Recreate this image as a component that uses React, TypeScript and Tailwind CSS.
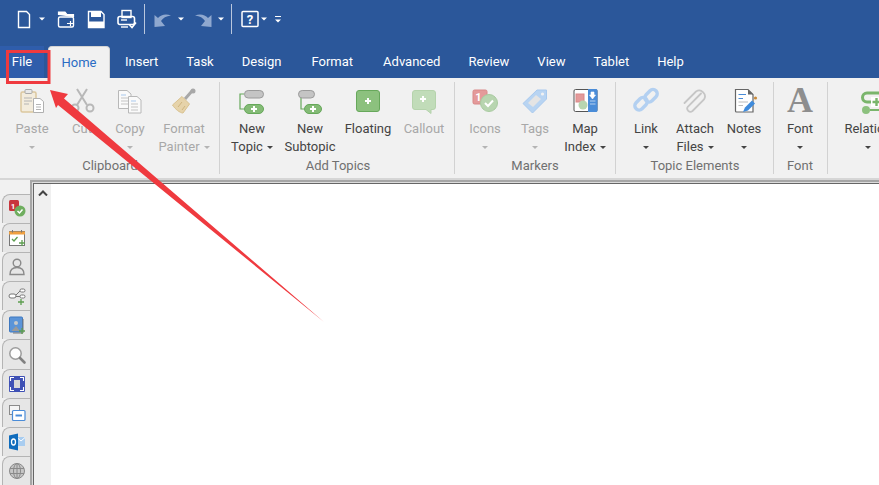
import { ReactNode } from "react";

const font = { fontFamily: 'Roboto, "Open Sans", sans-serif' };

function Caret({ light, className = "" }: { light?: boolean; className?: string }) {
  return (
    <svg viewBox="0 0 6 3" className={`inline-block h-[3px] w-1.5 ${className}`}>
      <path d="M0 0H6L3 3Z" fill={light ? "#b4b4b4" : "#444444"} />
    </svg>
  );
}

function Icon({ children }: { children: ReactNode }) {
  return (
    <svg viewBox="0 0 28 28" className="h-7 w-7 shrink-0">
      {children}
    </svg>
  );
}

function Plus({ x, y, size = 3, color = "#ffffff", w = 2 }: { x: number; y: number; size?: number; color?: string; w?: number }) {
  return <path d={`M${x - size} ${y}H${x + size}M${x} ${y - size}V${y + size}`} stroke={color} strokeWidth={w} fill="none" />;
}

function QatIcon({ children, className = "" }: { children: ReactNode; className?: string }) {
  return (
    <svg viewBox="0 0 24 24" className={`h-6 w-6 shrink-0 ${className}`}>
      {children}
    </svg>
  );
}

function QatCaret({ className = "" }: { className?: string }) {
  return (
    <div className={`flex w-3 justify-center ${className}`}>
      <svg viewBox="0 0 6 3" className="h-1 w-1.5">
        <path d="M0 0H6L3 3Z" fill="#ffffff" />
      </svg>
    </div>
  );
}

function QuickAccess() {
  return (
    <div className="flex items-center pl-3 pt-1 pb-3">
      <QatIcon>
        <path d="M6.5 4.5H14.5L17.5 7.5V20.5H6.5Z" fill="none" stroke="#fff" strokeWidth="1.4" />
      </QatIcon>
      <QatCaret />
      <QatIcon className="ml-1.5">
        <path d="M4.5 8V5H11L13 7.5H19.5V10" fill="#fff" stroke="#fff" strokeWidth="1.2" />
        <rect x="4.5" y="10" width="15" height="10" rx="1.5" fill="none" stroke="#fff" strokeWidth="1.4" />
        <path d="M13 16.5H19M16.5 14V19" stroke="#fff" strokeWidth="1.2" />
      </QatIcon>
      <QatIcon className="ml-1.5">
        <path d="M4.5 4.5H17L20 7.5V20.5H4.5Z" fill="none" stroke="#fff" strokeWidth="1.4" />
        <rect x="7" y="4.5" width="10" height="5.5" fill="#fff" />
        <rect x="4.5" y="14.5" width="15.5" height="6" fill="#fff" />
      </QatIcon>
      <QatIcon className="ml-1.5">
        <rect x="8" y="3.5" width="9" height="7" fill="none" stroke="#fff" strokeWidth="1.4" />
        <rect x="4" y="9.5" width="16.5" height="8" rx="2" fill="none" stroke="#fff" strokeWidth="1.6" />
        <path d="M7 13H13" stroke="#fff" strokeWidth="1.4" />
        <path d="M7 20H14" stroke="#fff" strokeWidth="1.4" />
        <path d="M15.5 18L18 20.5L22 15.5" stroke="#fff" strokeWidth="1.6" fill="none" />
      </QatIcon>
      <div className="ml-1.5 h-7.5 w-px bg-[#b9c7de]" />
      <QatIcon className="ml-1.5">
        <path d="M3.5 20V8L7 11C10 7.5 15 6.5 20 8.5C15 9 12 11 10 14L14 19Z" fill="#8fa8cf" />
      </QatIcon>
      <QatCaret />
      <QatIcon className="ml-1">
        <path d="M20.5 20V8L17 11C14 7.5 9 6.5 4 8.5C9 9 12 11 14 14L10 19Z" fill="#8fa8cf" />
      </QatIcon>
      <QatCaret />
      <div className="ml-1 h-7.5 w-px bg-[#b9c7de]" />
      <QatIcon className="ml-1.5">
        <rect x="4" y="4.5" width="16" height="15" rx="1" fill="none" stroke="#fff" strokeWidth="1.5" />
        <text x="12" y="17" textAnchor="middle" fontSize="13" fontWeight="700" fill="#fff" style={font}>?</text>
      </QatIcon>
      <QatCaret className="-ml-1" />
      <div className="ml-0.5 flex w-3 flex-col items-center gap-0.5">
        <div className="h-px w-1.5 bg-white" />
        <svg viewBox="0 0 6 3" className="h-1 w-1.5">
          <path d="M0 0H6L3 3Z" fill="#ffffff" />
        </svg>
      </div>
    </div>
  );
}

function Tabs() {
  const tabs = [
    { label: "Insert", className: "" },
    { label: "Task", className: "" },
    { label: "Design", className: "" },
    { label: "Format", className: "ml-0.5" },
    { label: "Advanced", className: "ml-0.5" },
    { label: "Review", className: "" },
    { label: "View", className: "" },
    { label: "Tablet", className: "" },
    { label: "Help", className: "" },
  ];
  return (
    <div className="flex h-8 text-[13px] text-white">
      <div className="flex w-11 items-center justify-center bg-[#2f5dab]">File</div>
      <div className="ml-1 flex w-15.5 items-center justify-center rounded-t-sm border border-b-0 border-[#d4d4d4] bg-[#f1f1f1] text-[#2b6cc4]">Home</div>
      <div className="ml-px flex">
        {tabs.map((t) => (
          <div key={t.label} className={`flex items-center px-3.5 ${t.className}`}>
            {t.label}
          </div>
        ))}
      </div>
    </div>
  );
}

function RibbonButton({
  icon,
  lines,
  caret,
  disabled,
  className = "w-12",
}: {
  icon: ReactNode;
  lines: string[];
  caret?: boolean;
  disabled?: boolean;
  className?: string;
}) {
  const two = lines.length > 1;
  return (
    <div className={`flex shrink-0 flex-col items-center ${className} ${disabled ? "text-[#a8a8a8]" : "text-[#444444]"}`}>
      {icon}
      <div className="mt-1.5 flex h-9 flex-col items-center whitespace-nowrap text-[13px] leading-4.5">
        <span>{lines[0]}</span>
        {two ? (
          <span className="flex items-center gap-1">
            {lines[1]}
            {caret && <Caret light={disabled} />}
          </span>
        ) : (
          caret && (
            <span className="flex h-4.5 items-center">
              <Caret light={disabled} />
            </span>
          )
        )}
      </div>
    </div>
  );
}

function Group({ label, children, className = "" }: { label?: string; children: ReactNode; className?: string }) {
  return (
    <div className={`relative flex shrink-0 flex-col pt-2 ${className}`}>
      <div className="flex">{children}</div>
      <div className="flex-1 text-center text-[13px] leading-5 text-[#707070]">{label}</div>
    </div>
  );
}

function Sep() {
  return <div className="my-1 ml-px w-px shrink-0 bg-[#d2d2d2]" />;
}

function Ribbon() {
  return (
    <div className="flex h-25 overflow-hidden bg-[#f1f1f1]">
      <Group label="Clipboard" className="pl-2 pr-1.5">
        <RibbonButton
          disabled
          caret
          lines={["Paste"]}
          icon={
            <Icon>
              <rect x="3" y="6" width="15" height="20" rx="1.5" fill="#f3ecdd" stroke="#dcc79e" strokeWidth="1.5" />
              <rect x="7" y="3.5" width="7" height="4" rx="1" fill="#e9e9e9" stroke="#aaaaaa" />
              <path d="M6 12H14M6 15H14M6 18H11" stroke="#b4b4b4" />
              <path d="M15.5 12.5H22L25.5 15.5V26.5H15.5Z" fill="#fff" stroke="#b0b0b0" />
              <path d="M18 18.5H23M18 21H23M18 23.5H23" stroke="#b4b4b4" />
            </Icon>
          }
        />
        <RibbonButton
          disabled
          lines={["Cut"]}
          className="ml-0.5 w-12"
          icon={
            <Icon>
              <path d="M9 3L19 19M19 3L9 19" stroke="#b8b8b8" strokeWidth="2" fill="none" />
              <circle cx="22" cy="22" r="3.5" fill="none" stroke="#b8b8b8" strokeWidth="2" />
              <circle cx="7" cy="22" r="3.5" fill="none" stroke="#b8b8b8" strokeWidth="2" />
            </Icon>
          }
        />
        <RibbonButton
          disabled
          caret
          lines={["Copy"]}
          icon={
            <Icon>
              <path d="M2.5 4.5H11L15 8V22.5H2.5Z" fill="#fafafa" stroke="#b8b8b8" />
              <path d="M5 9H10" stroke="#a9c9ee" />
              <path d="M5 12H12M5 15H12M5 18H12" stroke="#c4c4c4" />
              <path d="M12.5 10.5H21L25 14V27H12.5Z" fill="#fafafa" stroke="#b8b8b8" />
              <path d="M15 15H20" stroke="#a9c9ee" />
              <path d="M15 18H22M15 21H22M15 24H22" stroke="#c4c4c4" />
            </Icon>
          }
        />
        <RibbonButton
          disabled
          caret
          lines={["Format", "Painter"]}
          className="ml-0.5 w-14"
          icon={
            <Icon>
              <path d="M15 13L22 5" stroke="#a8a8a8" strokeWidth="3" />
              <circle cx="23" cy="5" r="2.5" fill="#a8a8a8" />
              <path d="M2.5 19L12 10.5L19.5 18L13 27C10 27 5 23 2.5 19Z" fill="#e6d3aa" stroke="#d9c290" />
              <path d="M8 21L12 16M12 24L15 20" stroke="#cfb57f" />
            </Icon>
          }
        />
      </Group>
      <Sep />
      <Group label="Add Topics" className="pl-1 pr-px">
        <div className="flex gap-0.5">
          <RibbonButton
            caret
            lines={["New", "Topic"]}
            className="w-14"
            icon={
              <Icon>
                <path d="M6 8H2V23H6" stroke="#66a85a" strokeWidth="1.2" fill="none" />
                <rect x="6.5" y="4.5" width="19" height="7.5" rx="3.7" fill="#c4c4c4" stroke="#9a9a9a" />
                <rect x="6.5" y="18.5" width="19" height="9" rx="4.5" fill="#84bb76" stroke="#66a85a" />
                <Plus x={16} y={23} />
              </Icon>
            }
          />
          <RibbonButton
            lines={["New", "Subtopic"]}
            className="w-14"
            icon={
              <Icon>
                <path d="M5 12V23H8" stroke="#66a85a" strokeWidth="1.2" fill="none" />
                <rect x="2.5" y="4.5" width="16" height="7.5" rx="3.7" fill="#c4c4c4" stroke="#9a9a9a" />
                <rect x="8.5" y="18.5" width="17" height="9" rx="4.5" fill="#84bb76" stroke="#66a85a" />
                <Plus x={17} y={23} />
              </Icon>
            }
          />
          <RibbonButton
            lines={["Floating"]}
            className="w-14"
            icon={
              <Icon>
                <rect x="2.5" y="4.5" width="23" height="21" rx="2.5" fill="#8cc17e" stroke="#67a85b" />
                <Plus x={14} y={15} />
              </Icon>
            }
          />
          <RibbonButton
            disabled
            lines={["Callout"]}
            className="-ml-0.5 w-14"
            icon={
              <Icon>
                <path d="M5 4.5H23A2.5 2.5 0 0 1 25.5 7V21A2.5 2.5 0 0 1 23 23.5H21V27.5L16 23.5H5A2.5 2.5 0 0 1 2.5 21V7A2.5 2.5 0 0 1 5 4.5Z" fill="#c1dcb9" stroke="#b5d3ac" />
                <Plus x={13} y={13} />
              </Icon>
            }
          />
        </div>
      </Group>
      <Sep />
      <Group label="Markers" className="pl-1.5 pr-1.25">
        <div className="flex gap-0.5">
          <RibbonButton
            disabled
            caret
            lines={["Icons"]}
            icon={
              <Icon>
                <rect x="2" y="4" width="14" height="14" rx="1.5" fill="#e49a9a" stroke="#d98888" />
                <text x="7.5" y="15" textAnchor="middle" fontSize="11" fontWeight="700" fill="#fff" style={font}>1</text>
                <circle cx="18" cy="17" r="8.5" fill="#b8d5b0" stroke="#a9cba0" />
                <path d="M14 17L17 20L22 14.5" stroke="#fff" strokeWidth="2" fill="none" />
              </Icon>
            }
          />
          <RibbonButton
            disabled
            caret
            lines={["Tags"]}
            icon={
              <Icon>
                <path d="M16 4H25.5V13L11.5 27L2 17.5Z" fill="#b8d4f2" stroke="#a8c9ee" strokeLinejoin="round" />
                <circle cx="21.5" cy="8" r="1.6" fill="#f1f1f1" />
                <path d="M7 17L15 9L20 13L12 21Z" fill="#e4e4e4" />
              </Icon>
            }
          />
          <RibbonButton
            caret
            lines={["Map", "Index"]}
            icon={
              <Icon>
                <rect x="3" y="3.5" width="23" height="22" rx="1.5" fill="#fff" stroke="#555555" />
                <path d="M17 3H25A1.5 1.5 0 0 1 26.5 4.5V24.5A1.5 1.5 0 0 1 25 26H17Z" fill="#4a8cd8" />
                <path d="M20 6H23V9H24.5L21.5 13L18.5 9H20ZM19 15H24.5M19 18H24.5" fill="#fff" stroke="#fff" strokeWidth="0.6" />
                <rect x="5" y="8" width="8" height="8" fill="#e49a9a" stroke="#d98888" />
                <circle cx="12" cy="19" r="4.5" fill="#b8d5b0" />
              </Icon>
            }
          />
        </div>
      </Group>
      <Sep />
      <Group label="Topic Elements" className="pl-1.5 pr-1">
        <div className="flex gap-px">
          <RibbonButton
            caret
            lines={["Link"]}
            icon={
              <Icon>
                <g fill="none" stroke="#b3d0f1" strokeWidth="3.4">
                  <rect x="2" y="13.5" width="14" height="8.5" rx="4.2" transform="rotate(-45 9 17.7)" />
                  <rect x="12" y="5.5" width="14" height="8.5" rx="4.2" transform="rotate(-45 19 9.7)" />
                </g>
              </Icon>
            }
          />
          <RibbonButton
            caret
            lines={["Attach", "Files"]}
            icon={
              <Icon>
                <path d="M21 5.5L8 18.5A3.2 3.2 0 0 0 12.5 23L24 11.5A5.8 5.8 0 0 0 16 3.5L4.5 15" transform="translate(-1 2)" fill="none" stroke="#c6c6c6" strokeWidth="1.8" strokeLinecap="round" />
              </Icon>
            }
          />
          <RibbonButton
            caret
            lines={["Notes"]}
            icon={
              <Icon>
                <path d="M5.5 3.5H18L23 8.5V26H6.5A1 1 0 0 1 5.5 25Z" fill="#fff" stroke="#666666" strokeWidth="1.2" />
                <path d="M18 3.5V8.5H23Z" fill="#666666" />
                <path d="M8.5 8.5H16M8.5 12.5H13" stroke="#4a8cd8" strokeWidth="1.2" />
                <path d="M8.5 16H18M8.5 19.5H13" stroke="#bbbbbb" />
                <path d="M13 26L15 21.5L22 14.5L25 17.5L18 24.5Z" fill="#3f8bdc" />
                <circle cx="25.5" cy="12" r="1.6" fill="#c98a3a" />
              </Icon>
            }
          />
        </div>
      </Group>
      <Sep />
      <Group label="Font" className="px-0.5">
        <RibbonButton
          caret
          lines={["Font"]}
          icon={
            <div className="flex h-7 items-center font-['Liberation_Serif',serif] text-4xl leading-none font-bold text-[#8e8e8e]">A</div>
          }
        />
      </Group>
      <Sep />
      <Group className="pl-3">
        <RibbonButton
          caret
          lines={["Relation"]}
          className="w-14"
          icon={
            <Icon>
              <path d="M28 7H13A4.5 4.5 0 0 0 13 16H28" fill="none" stroke="#7ab56c" strokeWidth="3" />
              <circle cx="12" cy="24" r="4" fill="#8cc17e" />
              <path d="M16 24H28" stroke="#7ab56c" strokeWidth="2" />
              <rect x="17" y="11" width="11" height="10" fill="#fff" />
              <Plus x={22.5} y={16} size={4} color="#7ab56c" w={2.4} />
            </Icon>
          }
        />
      </Group>
    </div>
  );
}

function SideTab({ children }: { children: ReactNode }) {
  return (
    <div className="flex h-7.5 w-7 items-center justify-center rounded-tl-lg border border-r-0 border-b-0 border-[#b4b4b4] bg-[#e6e6e6]">
      <svg viewBox="0 0 20 20" className="h-5 w-5">
        {children}
      </svg>
    </div>
  );
}

function Sidebar() {
  return (
    <div className="flex w-7.5 shrink-0 flex-col pl-0.5 pt-3.5">
      <SideTab>
        <rect x="2" y="1" width="10" height="11" rx="1.5" fill="#c8353c" />
        <text x="6" y="9.5" textAnchor="middle" fontSize="8" fontWeight="700" fill="#fff" style={font}>1</text>
        <circle cx="13" cy="12" r="5.5" fill="#6fae5f" />
        <path d="M10.5 12L12.5 14L15.5 10.5" stroke="#fff" strokeWidth="1.5" fill="none" />
      </SideTab>
      <SideTab>
        <rect x="2.5" y="3.5" width="15" height="14" fill="#fff" stroke="#777777" />
        <rect x="2" y="3.5" width="16" height="3" fill="#f0a040" />
        <path d="M5.5 2V4.5M14.5 2V4.5" stroke="#777777" />
        <path d="M5 11L7 13L10.5 9" stroke="#5d9e50" strokeWidth="1.3" fill="none" />
        <Plus x={15} y={15} size={3} color="#5d9e50" w={1.3} />
      </SideTab>
      <SideTab>
        <circle cx="10" cy="6" r="3.8" fill="none" stroke="#8a8a8a" strokeWidth="1.4" />
        <path d="M3 17.5C3 12.5 6 10.5 10 10.5C14 10.5 17 12.5 17 17.5Z" fill="none" stroke="#8a8a8a" strokeWidth="1.4" />
      </SideTab>
      <SideTab>
        <rect x="2" y="8" width="7" height="4" rx="2" fill="#fff" stroke="#777777" />
        <rect x="13" y="3" width="5" height="3" rx="1.5" fill="#fff" stroke="#777777" />
        <rect x="13" y="9" width="5" height="3" rx="1.5" fill="#fff" stroke="#777777" />
        <path d="M9 9L13 5M9 10.5H13" stroke="#777777" />
        <Plus x={14} y={16} size={3} color="#5d9e50" w={1.3} />
      </SideTab>
      <SideTab>
        <rect x="2.5" y="2" width="13" height="15" rx="1" fill="#5b94d8" stroke="#3e78c0" />
        <path d="M16 4V18H6" fill="none" stroke="#777777" />
        <circle cx="9" cy="8" r="2" fill="#c9c9c9" />
        <path d="M4.5 16L9 11L13 16Z" fill="#9a9a9a" />
        <Plus x={15} y={16} size={3} color="#5d9e50" w={1.3} />
      </SideTab>
      <SideTab>
        <circle cx="8.5" cy="8.5" r="5.7" fill="#fdfdfd" stroke="#9c9c9c" strokeWidth="1.5" />
        <path d="M13 13L17.5 17.5" stroke="#808080" strokeWidth="2.6" strokeLinecap="round" />
      </SideTab>
      <SideTab>
        <rect x="2" y="2" width="16" height="16" rx="1" fill="#3f51b5" />
        <path d="M3.5 7V3.5H7M13 3.5H16.5V7M16.5 13V16.5H13M7 16.5H3.5V13" stroke="#fff" strokeWidth="1.1" fill="none" />
        <rect x="7" y="6" width="6" height="8" fill="#d8d8d8" />
      </SideTab>
      <SideTab>
        <rect x="2.5" y="2.5" width="10" height="9" fill="#f4f4f4" stroke="#8a8a8a" />
        <rect x="5.5" y="7.5" width="12.5" height="10" rx="1" fill="#fff" stroke="#4a8cd8" strokeWidth="1.2" />
        <path d="M8.5 12.5H15" stroke="#4a8cd8" strokeWidth="2" />
      </SideTab>
      <SideTab>
        <path d="M10 5H18V14H10Z" fill="#a9cdf0" />
        <path d="M10 5.5L14 9L18 5.5" stroke="#fff" fill="none" />
        <path d="M2 3.5L11 1.5V18.5L2 16.5Z" fill="#0f6cbd" />
        <ellipse cx="6.5" cy="10" rx="2" ry="3" fill="none" stroke="#fff" strokeWidth="1.3" />
      </SideTab>
      <SideTab>
        <circle cx="10" cy="10" r="7.5" fill="#c6c6c6" stroke="#8a8a8a" />
        <ellipse cx="10" cy="10" rx="3.5" ry="7.5" fill="none" stroke="#8a8a8a" />
        <path d="M3 7.5H17M3 12.5H17M10 2.5V17.5" stroke="#8a8a8a" />
      </SideTab>
    </div>
  );
}

export default function App() {
  return (
    <div className="relative flex h-screen flex-col overflow-hidden bg-[#f1f1f1]" style={font}>
      <div className="bg-[#2b579a]">
        <QuickAccess />
        <Tabs />
      </div>
      <Ribbon />
      <div className="h-0.5 bg-[#d6d6d6]" />
      <div className="flex min-h-0 flex-1">
        <Sidebar />
        <div className="flex flex-1 border-t-2 border-l-2 border-[#a6a6a6]">
          <div className="flex flex-1 border-t border-l border-[#dcdcdc]">
            <div className="flex flex-1 border-t border-l border-[#666666]">
              <div className="flex w-4.25 justify-center bg-[#f0f0f0] pt-1.5">
                <svg viewBox="0 0 10 6" className="h-1.5 w-2.5">
                  <path d="M1 5.5L5 1.5L9 5.5" stroke="#444444" strokeWidth="2" fill="none" />
                </svg>
              </div>
              <div className="flex-1 bg-white" />
            </div>
          </div>
        </div>
      </div>

      {/* Red annotation on top of the screenshot */}
      <svg viewBox="0 0 879 485" className="pointer-events-none absolute inset-0 h-[485px] w-[879px]">
        <rect x="7.5" y="51.5" width="41.5" height="31" fill="none" stroke="#ef3a3f" strokeWidth="3" />
        <path d="M50 90L68 94L64 98.5L324 322L58 105L56 108Z" fill="#ef3a3f" />
      </svg>
    </div>
  );
}
